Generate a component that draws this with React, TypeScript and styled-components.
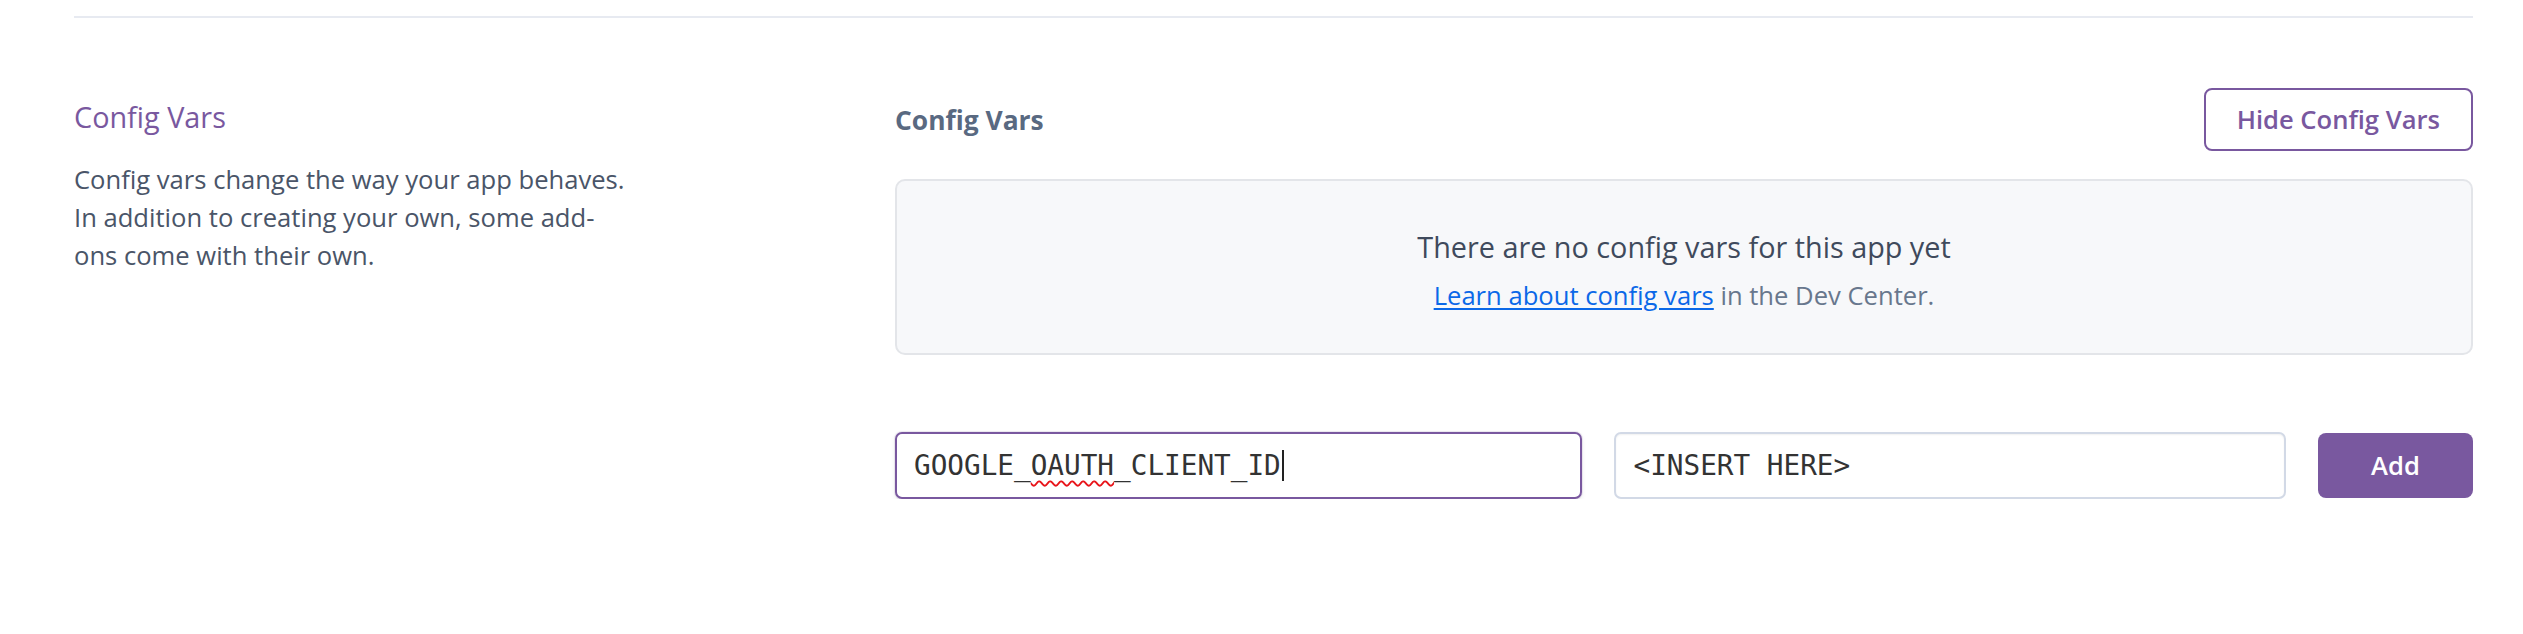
import React from "react";
import styled, { createGlobalStyle, css } from "styled-components";

const purple = "#79589f";

const GlobalStyle = createGlobalStyle`
  html, body { margin: 0; padding: 0; background: #ffffff; }
  body {
    font-family: "Open Sans", "Noto Sans", sans-serif;
    -webkit-font-smoothing: antialiased;
  }
  * { box-sizing: border-box; }
`;

const Page = styled.div`
  padding: 16px 50px 0 74px;
`;

const Divider = styled.hr`
  margin: 0;
  border: 0;
  height: 2px;
  background: #e7eaf1;
`;

const Section = styled.section`
  display: grid;
  grid-template-columns: 821px 1fr;
  margin-top: 70px;
`;

const Intro = styled.div`
  padding-top: 12px;
`;

const IntroTitle = styled.h2`
  margin: 0;
  font-size: 28.8px;
  line-height: 34.56px;
  font-weight: 400;
  color: ${purple};
`;

const IntroText = styled.p`
  margin: 26px 0 0;
  max-width: 558px;
  font-size: 25.6px;
  line-height: 38.4px;
  color: #4a5568;
`;

const Panel = styled.div`
  min-width: 0;
`;

const PanelHeader = styled.div`
  display: flex;
  align-items: center;
  justify-content: space-between;
`;

const PanelTitle = styled.h3`
  margin: 0;
  padding-top: 3px;
  font-size: 26.4px;
  line-height: 1.2;
  font-weight: 700;
  color: #596981;
`;

const OutlineButton = styled.button`
  height: 63px;
  padding: 0 31px;
  border: 2px solid ${purple};
  border-radius: 8px;
  background: #ffffff;
  color: ${purple};
  font-family: "Open Sans", sans-serif;
  font-size: 25.6px;
  font-weight: 600;
  cursor: pointer;
`;

const EmptyState = styled.div`
  margin-top: 28px;
  border: 2px solid #e3e5e9;
  border-radius: 10px;
  background: #f7f8fa;
  padding: 44px 20px 37.6px;
  text-align: center;
`;

const EmptyTitle = styled.p`
  margin: 0;
  font-size: 28.8px;
  line-height: 43.2px;
  color: #3f4a5c;
`;

const EmptyHint = styled.p`
  margin: 9px 0 0;
  font-size: 25.6px;
  line-height: 38.4px;
  color: #68778d;
`;

const HintLink = styled.a`
  color: #0b68e8;
  text-decoration: underline;
  text-decoration-thickness: 2px;
  text-underline-offset: 3px;
`;

const FormRow = styled.form`
  display: grid;
  grid-template-columns: 688fr 672fr 155px;
  column-gap: 32px;
  align-items: center;
  margin-top: 77px;
`;

const fieldBase = css<{ $focused?: boolean }>`
  width: 100%;
  height: 67px;
  margin: 0;
  padding: 0 17px;
  border: 2px solid ${(p) => (p.$focused ? purple : "#d2d9e6")};
  border-radius: 7px;
  background: #ffffff;
  color: #333333;
  font-family: "DejaVu Sans Mono", "Liberation Mono", monospace;
  font-size: 27.7px;
  outline: none;
  box-shadow: ${(p) =>
    p.$focused
      ? "0 0 0 1px rgba(121, 88, 159, 0.12), 0 2px 5px rgba(0, 0, 0, 0.08)"
      : "inset 0 1px 2px rgba(0, 0, 0, 0.06)"};
`;

const KeyField = styled.div<{ $focused?: boolean }>`
  ${fieldBase}
  display: flex;
  align-items: center;
  white-space: pre;
`;

const ValueField = styled.input<{ $focused?: boolean }>`
  ${fieldBase}
`;

const Misspelled = styled.span`
  text-decoration: underline wavy #e8141a;
  text-decoration-thickness: 1.5px;
  text-underline-offset: 5px;
  text-decoration-skip-ink: none;
`;

const Caret = styled.span`
  display: inline-block;
  width: 2px;
  height: 31px;
  margin-left: 1px;
  background: #222222;
`;

const AddButton = styled.button`
  height: 65px;
  border: 0;
  border-radius: 8px;
  background: ${purple};
  color: #ffffff;
  font-family: "Open Sans", sans-serif;
  font-size: 25.6px;
  font-weight: 600;
  cursor: pointer;
`;

export default function App() {
  return (
    <>
      <GlobalStyle />
      <Page>
        <Divider />
        <Section>
          <Intro>
            <IntroTitle>Config Vars</IntroTitle>
            <IntroText>
              Config vars change the way your app behaves. In addition to creating your own, some
              add-ons come with their own.
            </IntroText>
          </Intro>
          <Panel>
            <PanelHeader>
              <PanelTitle>Config Vars</PanelTitle>
              <OutlineButton type="button">Hide Config Vars</OutlineButton>
            </PanelHeader>
            <EmptyState>
              <EmptyTitle>There are no config vars for this app yet</EmptyTitle>
              <EmptyHint>
                <HintLink href="#">Learn about config vars</HintLink> in the Dev Center.
              </EmptyHint>
            </EmptyState>
            <FormRow onSubmit={(e) => e.preventDefault()}>
              <KeyField $focused role="textbox" aria-label="KEY">
                GOOGLE_<Misspelled>OAUTH</Misspelled>_CLIENT_ID
                <Caret />
              </KeyField>
              <ValueField aria-label="VALUE" readOnly value="<INSERT HERE>" />
              <AddButton type="submit">Add</AddButton>
            </FormRow>
          </Panel>
        </Section>
      </Page>
    </>
  );
}
